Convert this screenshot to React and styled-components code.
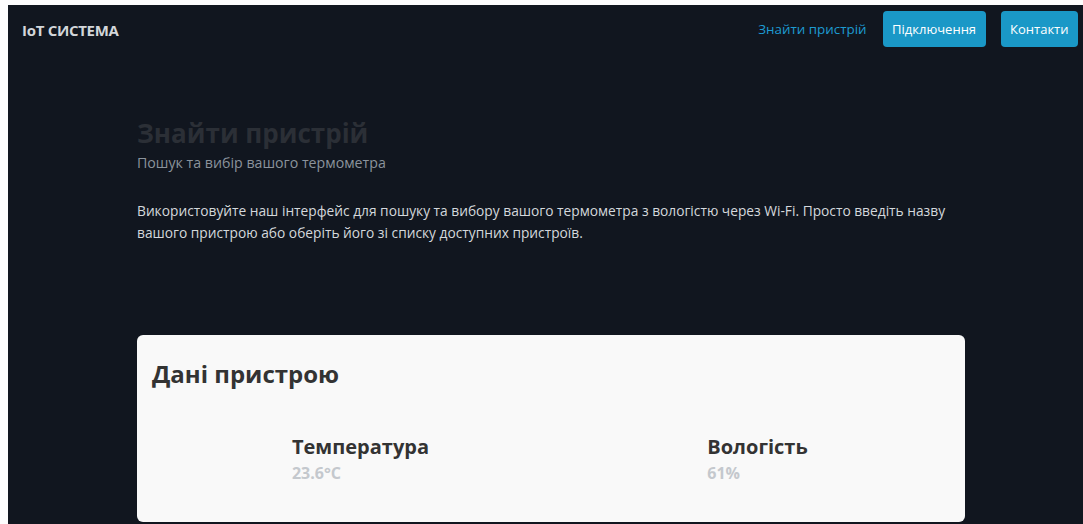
import React from "react";
import styled, { createGlobalStyle } from "styled-components";

const GlobalStyle = createGlobalStyle`
  html, body {
    margin: 0;
    padding: 0;
    background: #fdfdfd;
    overflow: hidden;
  }
  body {
    font-family: "Open Sans", "Noto Sans", sans-serif;
    color: #d0d4d8;
  }
  * { box-sizing: border-box; }
`;

const Page = styled.div`
  margin: 5px 0 0 8px;
  height: 519px;
  background: #11161f;
  overflow: hidden;
`;

const Header = styled.header`
  height: 48px;
  display: flex;
  align-items: center;
  justify-content: space-between;
  padding: 0 5px 0 14px;
`;

const Logo = styled.div`
  font-size: 15px;
  font-weight: 700;
  color: #d3d6da;
  letter-spacing: -0.3px;
  margin-top: 2px;
`;

const Nav = styled.nav`
  display: flex;
  align-items: center;
  gap: 15px;
`;

const NavLink = styled.a`
  font-size: 13.4px;
  color: #1d9bd1;
  text-decoration: none;
  margin-right: 1px;
`;

const NavButton = styled.button`
  font-family: inherit;
  font-size: 13px;
  color: #fff;
  background: #1a98c7;
  border: 0;
  border-radius: 4px;
  height: 36px;
  padding: 0 9.5px;
`;

const Main = styled.main`
  width: 828px;
  margin: 63px 0 0 129px;
`;

const Title = styled.h1`
  margin: 0;
  font-size: 26px;
  font-weight: 700;
  color: #2b2f36;
  line-height: 34px;
`;

const Subtitle = styled.p`
  margin: 3px 0 0;
  font-size: 14.2px;
  color: #8b939c;
  line-height: 20px;
`;

const Lead = styled.p`
  margin: 27px 0 0;
  font-size: 13.75px;
  line-height: 22px;
  color: #d4d8dc;
`;

const Card = styled.section`
  margin-top: 91px;
  height: 187px;
  background: #f9f9f9;
  border-radius: 6px;
  padding: 21px 15px 0;
  color: #333;
`;

const CardTitle = styled.h2`
  margin: 0;
  font-size: 24px;
  font-weight: 700;
  color: #333;
  line-height: 36px;
`;

const Stats = styled.div`
  display: grid;
  grid-template-columns: 1fr 1fr;
  margin-top: 41px;
`;

const Stat = styled.div`
  justify-self: center;
  margin-left: ${(p) => p.$shift}px;
`;

const StatLabel = styled.div`
  font-size: 20px;
  font-weight: 700;
  color: #333;
  line-height: 28px;
`;

const StatValue = styled.div`
  margin-top: 1px;
  font-size: 16px;
  font-weight: 700;
  color: #c4c8cd;
  line-height: 22px;
`;

export default function App() {
  const stats = [
    { label: "Температура", value: "23.6°C", shift: 18 },
    { label: "Вологість", value: "61%", shift: 14 },
  ];

  return (
    <Page>
      <GlobalStyle />
      <Header>
        <Logo>IoT СИСТЕМА</Logo>
        <Nav>
          <NavLink href="#">Знайти пристрій</NavLink>
          <NavButton>Підключення</NavButton>
          <NavButton>Контакти</NavButton>
        </Nav>
      </Header>

      <Main>
        <Title>Знайти пристрій</Title>
        <Subtitle>Пошук та вибір вашого термометра</Subtitle>
        <Lead>
          Використовуйте наш інтерфейс для пошуку та вибору вашого термометра з
          вологістю через Wi-Fi. Просто введіть назву вашого пристрою або оберіть
          його зі списку доступних пристроїв.
        </Lead>

        <Card>
          <CardTitle>Дані пристрою</CardTitle>
          <Stats>
            {stats.map((s) => (
              <Stat key={s.label} $shift={s.shift}>
                <StatLabel>{s.label}</StatLabel>
                <StatValue>{s.value}</StatValue>
              </Stat>
            ))}
          </Stats>
        </Card>
      </Main>
    </Page>
  );
}
